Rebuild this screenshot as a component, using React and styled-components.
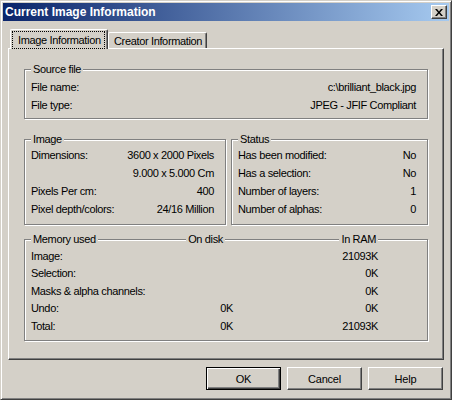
import React from "react";
import styled, { createGlobalStyle } from "styled-components";

const GlobalStyle = createGlobalStyle`
  html, body {
    margin: 0;
    padding: 0;
    background: #d4d0c8;
  }
  body {
    font-family: "Liberation Sans", Arial, sans-serif;
    font-size: 11px;
    letter-spacing: -0.35px;
    color: #000;
  }
`;

// window frame
const Window = styled.div`
  box-sizing: border-box;
  width: 452px;
  height: 400px;
  background: #d4d0c8;
  border: 1px solid;
  border-color: #d4d0c8 #404040 #404040 #d4d0c8;
  box-shadow: inset 1px 1px 0 #fff, inset -1px -1px 0 #808080;
  padding: 2px;
  display: flex;
  flex-direction: column;
`;

const TitleBar = styled.div`
  height: 18px;
  display: flex;
  align-items: center;
  padding: 0 2px;
  background: linear-gradient(to right, #0a246a, #a6caf0);
`;

const Title = styled.div`
  flex: 1;
  color: #fff;
  font-weight: bold;
  font-size: 12px;
  letter-spacing: 0;
  line-height: 18px;
`;

const CloseButton = styled.button`
  box-sizing: border-box;
  width: 16px;
  height: 14px;
  padding: 0;
  display: flex;
  align-items: center;
  justify-content: center;
  background: #d4d0c8;
  border: 1px solid;
  border-color: #fff #404040 #404040 #fff;
  box-shadow: inset -1px -1px 0 #808080;
`;

const Body = styled.div`
  flex: 1;
  display: flex;
  flex-direction: column;
  padding: 8px 5px 0;
`;

// tabs
const TabRow = styled.div`
  height: 19px;
  display: flex;
  align-items: flex-end;
  padding-left: 2px;
`;

const Tab = styled.div`
  box-sizing: border-box;
  position: relative;
  z-index: ${p => (p.$active ? 1 : 0)};
  width: ${p => p.$w}px;
  height: ${p => (p.$active ? 20 : 16)}px;
  margin-bottom: ${p => (p.$active ? -1 : 0)}px;
  display: flex;
  align-items: center;
  background: #d4d0c8;
  border: 1px solid;
  border-bottom: none;
  border-color: #fff #404040 #404040 #fff;
  border-radius: 2px 2px 0 0;
  box-shadow: inset -1px 0 0 #808080;
  padding: 0 ${p => (p.$active ? 2 : 0)}px 0 ${p => (p.$active ? 1 : 5)}px;
  white-space: nowrap;
  overflow: hidden;
`;

const TabLabel = styled.span`
  flex: ${p => (p.$focus ? 1 : "none")};
  align-self: ${p => (p.$focus ? "stretch" : "auto")};
  display: flex;
  align-items: center;
  margin-top: ${p => (p.$focus ? 1 : 0)}px;
  padding-left: ${p => (p.$focus ? 5 : 0)}px;
  border: ${p => (p.$focus ? "1px dotted #000" : "none")};
  font-size: 11px;
`;

const Panel = styled.div`
  box-sizing: border-box;
  height: 312px;
  background: #d4d0c8;
  border: 1px solid;
  border-color: #fff #404040 #404040 #fff;
  box-shadow: inset -1px -1px 0 #808080;
  padding: 20px 15px 0;
  display: flex;
  flex-direction: column;
`;

// etched group boxes
const GroupBox = styled.div`
  border: 1px solid #808080;
  box-shadow: 1px 1px 0 #fff, inset 1px 1px 0 #fff;
  padding: 0 11px ${p => p.$pb}px 6px;
  margin-top: ${p => p.$mt || 0}px;
`;

const Caption = styled.div`
  display: flex;
  height: 13px;
  line-height: 13px;
  margin: -7px 0 ${p => p.$mb}px;
`;

const CaptionText = styled.span`
  background: #d4d0c8;
  padding: 0 2px;
  justify-self: ${p => p.$align || "start"};
  margin-right: ${p => p.$mr || 0}px;
`;

const Row = styled.div`
  display: flex;
  justify-content: space-between;
  line-height: ${p => p.$lh}px;
  white-space: nowrap;
`;

const Split = styled.div`
  display: grid;
  grid-template-columns: 202px 197px;
  column-gap: 5px;
  margin-top: 20px;
`;

const MemoryGrid = styled.div`
  display: grid;
  grid-template-columns: 132px 70px 145px 1fr;
  line-height: ${p => p.$lh}px;
  white-space: nowrap;
`;

const MemoryCaption = styled(MemoryGrid)`
  height: 13px;
  line-height: 13px;
  margin: -7px 0 1.5px;
`;

const Cell = styled.span`
  text-align: ${p => p.$align || "left"};
`;

// buttons
const ButtonRow = styled.div`
  display: flex;
  justify-content: flex-end;
  gap: 6px;
  margin: 7px 1px 0 0;
`;

const Button = styled.button`
  box-sizing: border-box;
  width: 75px;
  height: 23px;
  padding: 0;
  background: #d4d0c8;
  font-family: "Liberation Sans", Arial, sans-serif;
  font-size: 11px;
  letter-spacing: -0.2px;
  color: #000;
  border: 1px solid;
  border-color: ${p => (p.$default ? "#000" : "#fff #404040 #404040 #fff")};
  box-shadow: ${p =>
    p.$default
      ? "inset 1px 1px 0 #fff, inset -1px -1px 0 #404040, inset -2px -2px 0 #808080"
      : "inset -1px -1px 0 #808080"};
`;

const CloseIcon = () => (
  <svg width="8" height="7" viewBox="0 0 8 7">
    <path d="M0 0h2l2 2.4L6 0h2L5 3.5 8 7H6L4 4.6 2 7H0l3-3.5z" fill="#000" />
  </svg>
);

const imageRows = [
  ["Dimensions:", "3600 x 2000 Pixels"],
  ["", "9.000 x 5.000 Cm"],
  ["Pixels Per cm:", "400"],
  ["Pixel depth/colors:", "24/16 Million"],
];

const statusRows = [
  ["Has been modified:", "No"],
  ["Has a selection:", "No"],
  ["Number of layers:", "1"],
  ["Number of alphas:", "0"],
];

const memoryRows = [
  ["Image:", "", "21093K"],
  ["Selection:", "", "0K"],
  ["Masks & alpha channels:", "", "0K"],
  ["Undo:", "0K", "0K"],
  ["Total:", "0K", "21093K"],
];

const App = () => {
  return (
    <>
      <GlobalStyle />
      <Window>
        <TitleBar>
          <Title>Current Image Information</Title>
          <CloseButton aria-label="Close">
            <CloseIcon />
          </CloseButton>
        </TitleBar>

        <Body>
          <TabRow>
            <Tab $active $w={98}>
              <TabLabel $focus>Image Information</TabLabel>
            </Tab>
            <Tab $w={99}>
              <TabLabel>Creator Information</TabLabel>
            </Tab>
          </TabRow>

          <Panel>
            <GroupBox $pb={4}>
              <Caption $mb={2}>
                <CaptionText>Source file</CaptionText>
              </Caption>
              <Row $lh={18}>
                <span>File name:</span>
                <span>c:\brilliant_black.jpg</span>
              </Row>
              <Row $lh={18}>
                <span>File type:</span>
                <span>JPEG - JFIF Compliant</span>
              </Row>
            </GroupBox>

            <Split>
              <GroupBox $pb={6}>
                <Caption $mb={0}>
                  <CaptionText>Image</CaptionText>
                </Caption>
                {imageRows.map(([label, value], i) => (
                  <Row $lh={18} key={i}>
                    <span>{label}</span>
                    <span>{value}</span>
                  </Row>
                ))}
              </GroupBox>
              <GroupBox $pb={6}>
                <Caption $mb={0}>
                  <CaptionText>Status</CaptionText>
                </Caption>
                {statusRows.map(([label, value], i) => (
                  <Row $lh={18} key={i}>
                    <span>{label}</span>
                    <span>{value}</span>
                  </Row>
                ))}
              </GroupBox>
            </Split>

            <GroupBox $pb={5} $mt={14}>
              <MemoryCaption>
                <CaptionText>Memory used</CaptionText>
                <CaptionText $align="end" $mr={8}>On disk</CaptionText>
                <CaptionText $align="end">In RAM</CaptionText>
              </MemoryCaption>
              <MemoryGrid $lh={17.5}>
                {memoryRows.map(([label, disk, ram], i) => (
                  <React.Fragment key={i}>
                    <Cell>{label}</Cell>
                    <Cell $align="right">{disk}</Cell>
                    <Cell $align="right">{ram}</Cell>
                    <Cell />
                  </React.Fragment>
                ))}
              </MemoryGrid>
            </GroupBox>
          </Panel>

          <ButtonRow>
            <Button $default>OK</Button>
            <Button>Cancel</Button>
            <Button>Help</Button>
          </ButtonRow>
        </Body>
      </Window>
    </>
  );
};

export default App;
